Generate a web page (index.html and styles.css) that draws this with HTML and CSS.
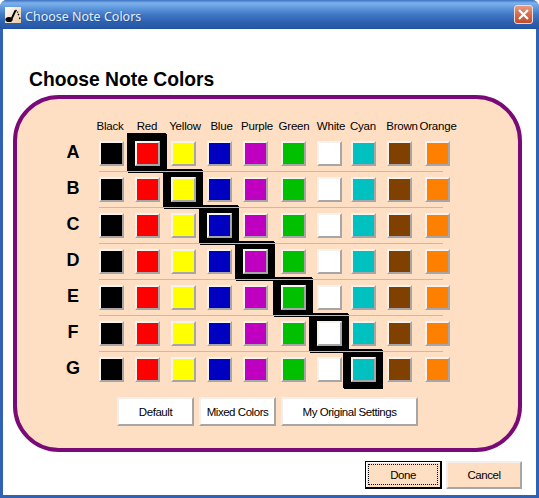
FILE: index.html
```html
<!DOCTYPE html>
<html lang="en">
<head>
<meta charset="utf-8">
<title>Choose Note Colors</title>
<link rel="stylesheet" href="styles.css">
</head>
<body>
<div class="window">
  <header class="titlebar">
    <svg class="app-icon" width="16" height="16" viewBox="0 0 16 16">
      <defs><linearGradient id="ig" x1="0" y1="0" x2="1" y2="1"><stop offset="0" stop-color="#fff"/><stop offset="1" stop-color="#e8c8a0"/></linearGradient></defs>
      <rect width="16" height="16" fill="url(#ig)"/>
      <ellipse cx="4" cy="12.5" rx="3.6" ry="2.6" fill="#000"/>
      <path d="M6.5 12 L10.5 3.5" stroke="#000" stroke-width="1.8" fill="none"/>
      <path d="M10.5 3 L13 5.5 M13 7 L14.5 9 M14.5 10.5 L15 12" stroke="#000" stroke-width="1.3" fill="none" stroke-dasharray="1.5 1"/>
    </svg>
    <span class="title-text">Choose Note Colors</span>
    <svg class="close-icon" width="19" height="19" viewBox="0 0 19 19">
      <defs><linearGradient id="cg" x1="0" y1="0" x2="0" y2="1"><stop offset="0" stop-color="#e8a088"/><stop offset=".5" stop-color="#d9694a"/><stop offset="1" stop-color="#c04a28"/></linearGradient></defs>
      <rect x=".5" y=".5" width="18" height="18" rx="2.5" fill="url(#cg)" stroke="#e6e0dc"/>
      <path d="M5 5 L14 14 M14 5 L5 14" stroke="#fff" stroke-width="2.2" fill="none"/>
    </svg>
  </header>
  <main class="client">
    <h1 class="heading">Choose Note Colors</h1>
    <section class="panel">
      <div class="labels">
        <span>Black</span><span>Red</span><span>Yellow</span><span>Blue</span><span>Purple</span><span>Green</span><span>White</span><span>Cyan</span><span>Brown</span><span>Orange</span>
      </div>
      <div class="row">
        <span class="letter">A</span>
        <i class="sw black"></i><i class="sw red on"></i><i class="sw yellow"></i><i class="sw blue"></i><i class="sw purple"></i><i class="sw green"></i><i class="sw white"></i><i class="sw cyan"></i><i class="sw brown"></i><i class="sw orange"></i>
      </div>
      <div class="row">
        <span class="letter">B</span>
        <i class="sw black"></i><i class="sw red"></i><i class="sw yellow on"></i><i class="sw blue"></i><i class="sw purple"></i><i class="sw green"></i><i class="sw white"></i><i class="sw cyan"></i><i class="sw brown"></i><i class="sw orange"></i>
      </div>
      <div class="row">
        <span class="letter">C</span>
        <i class="sw black"></i><i class="sw red"></i><i class="sw yellow"></i><i class="sw blue on"></i><i class="sw purple"></i><i class="sw green"></i><i class="sw white"></i><i class="sw cyan"></i><i class="sw brown"></i><i class="sw orange"></i>
      </div>
      <div class="row">
        <span class="letter">D</span>
        <i class="sw black"></i><i class="sw red"></i><i class="sw yellow"></i><i class="sw blue"></i><i class="sw purple on"></i><i class="sw green"></i><i class="sw white"></i><i class="sw cyan"></i><i class="sw brown"></i><i class="sw orange"></i>
      </div>
      <div class="row">
        <span class="letter">E</span>
        <i class="sw black"></i><i class="sw red"></i><i class="sw yellow"></i><i class="sw blue"></i><i class="sw purple"></i><i class="sw green on"></i><i class="sw white"></i><i class="sw cyan"></i><i class="sw brown"></i><i class="sw orange"></i>
      </div>
      <div class="row">
        <span class="letter">F</span>
        <i class="sw black"></i><i class="sw red"></i><i class="sw yellow"></i><i class="sw blue"></i><i class="sw purple"></i><i class="sw green"></i><i class="sw white on"></i><i class="sw cyan"></i><i class="sw brown"></i><i class="sw orange"></i>
      </div>
      <div class="row last">
        <span class="letter">G</span>
        <i class="sw black"></i><i class="sw red"></i><i class="sw yellow"></i><i class="sw blue"></i><i class="sw purple"></i><i class="sw green"></i><i class="sw white"></i><i class="sw cyan on"></i><i class="sw brown"></i><i class="sw orange"></i>
      </div>
      <div class="presets">
        <button class="btn w77">Default</button>
        <button class="btn w77">Mixed Colors</button>
        <button class="btn w137">My Original Settings</button>
      </div>
    </section>
    <footer class="actions">
      <button class="btn peach done"><span class="focus">Done</span></button>
      <button class="btn peach cancel">Cancel</button>
    </footer>
  </main>
</div>
</body>
</html>
```
FILE: styles.css
```css
html, body { margin: 0; padding: 0; background: #fff; }
body { width: 539px; height: 498px; overflow: hidden; font-family: "Liberation Sans", Arial, sans-serif; }
.window {
  width: 539px; height: 498px; box-sizing: border-box;
  display: flex; flex-direction: column;
  border-radius: 7px 7px 0 0; overflow: hidden;
  background: #2f62b4;
}
.titlebar {
  height: 29px; flex: none; display: flex; align-items: center;
  padding: 0 6px 0 5px; gap: 4px;
  background: linear-gradient(180deg, #3d72c4 0, #7db2ea 3px, #5f98de 8px, #3f76c4 15px, #2b5fae 23px, #2558a8 28px, #1f4c98 29px);
}
.app-icon { flex: none; margin-top: 1px; }
.title-text { flex: 1; padding-top: 3px; font-family: "Noto Sans", sans-serif; font-size: 12.5px; color: #e6effa; text-shadow: 1px 1px 0 #2a5296; }
.close-icon { flex: none; }
.client {
  flex: 1; margin: 0 3px 3px; background: #fff;
  display: flex; flex-direction: column;
}
.heading {
  margin: 41px 0 5px 26px; font-size: 19.3px; line-height: 20px; font-weight: bold; color: #000;
}
.panel {
  margin-left: 10px; width: 509px; height: 357px; box-sizing: border-box;
  background: #ffdfc4; border: 4px solid #7a0a78; border-radius: 46px;
  padding: 19px 0 0 30px;
}
.labels {
  display: grid; height: 16px; margin: 0 0 7px 45px;
  grid-template-columns: 36px 38px 38px 35px 36px 38px 36px 28px 50px 22px;
  justify-items: center; line-height: 16px; font-size: 11.5px; letter-spacing: -.2px; color: #000; white-space: nowrap;
}
.row {
  position: relative; height: 36px;
  display: grid; grid-template-columns: 52px 36px 36px 36px 36px 38px 36px 34px 36px 38px 25px;
  align-items: start;
}
.row::after {
  content: ""; position: absolute; left: 52px; width: 344px; top: 30px; height: 1px;
  background: #c9bbaa; z-index: 2;
}
.row.last::after { display: none; }
.letter { font-size: 18px; font-weight: bold; line-height: 23px; text-align: center; color: #000; }
.sw {
  display: block; width: 25px; height: 25px; box-sizing: border-box;
  border: 2px solid; border-color: #f6f2ee #a6a6a6 #a6a6a6 #f6f2ee;
}
.sw.on { box-shadow: 0 0 0 7px #000, -1px -1px 0 7px #000; }
.black { background: #000; }
.red { background: #ff0000; }
.yellow { background: #ffff00; }
.blue { background: #0000c0; }
.purple { background: #c000c0; }
.green { background: #00c000; }
.white { background: #fff; }
.cyan { background: #00c0c0; }
.brown { background: #804000; }
.orange { background: #ff8000; }
.presets { display: flex; gap: 5px; margin: 4px 0 0 70px; }
.btn {
  height: 29px; padding: 0; box-sizing: border-box; background: #fff; color: #000;
  font: 11.5px "Liberation Sans", Arial, sans-serif; letter-spacing: -.45px;
  border: 2px solid; border-color: #f4efea #a6a6a6 #a6a6a6 #f4efea;
}
.w77 { width: 77px; }
.w137 { width: 137px; }
.actions { display: flex; justify-content: flex-end; gap: 4px; margin: 9px 14px 0 0; }
.peach { background: #ffdfc4; }
.done { width: 77px; height: 28px; border: 1px solid #000; border-right-width: 2px; border-bottom-width: 2px; padding: 2px; box-shadow: inset 1px 1px 0 #fff; display: flex; }
.focus { flex: 1; display: flex; align-items: center; justify-content: center; border: 1px dotted #000; }
.cancel { width: 76px; height: 28px; }
```
